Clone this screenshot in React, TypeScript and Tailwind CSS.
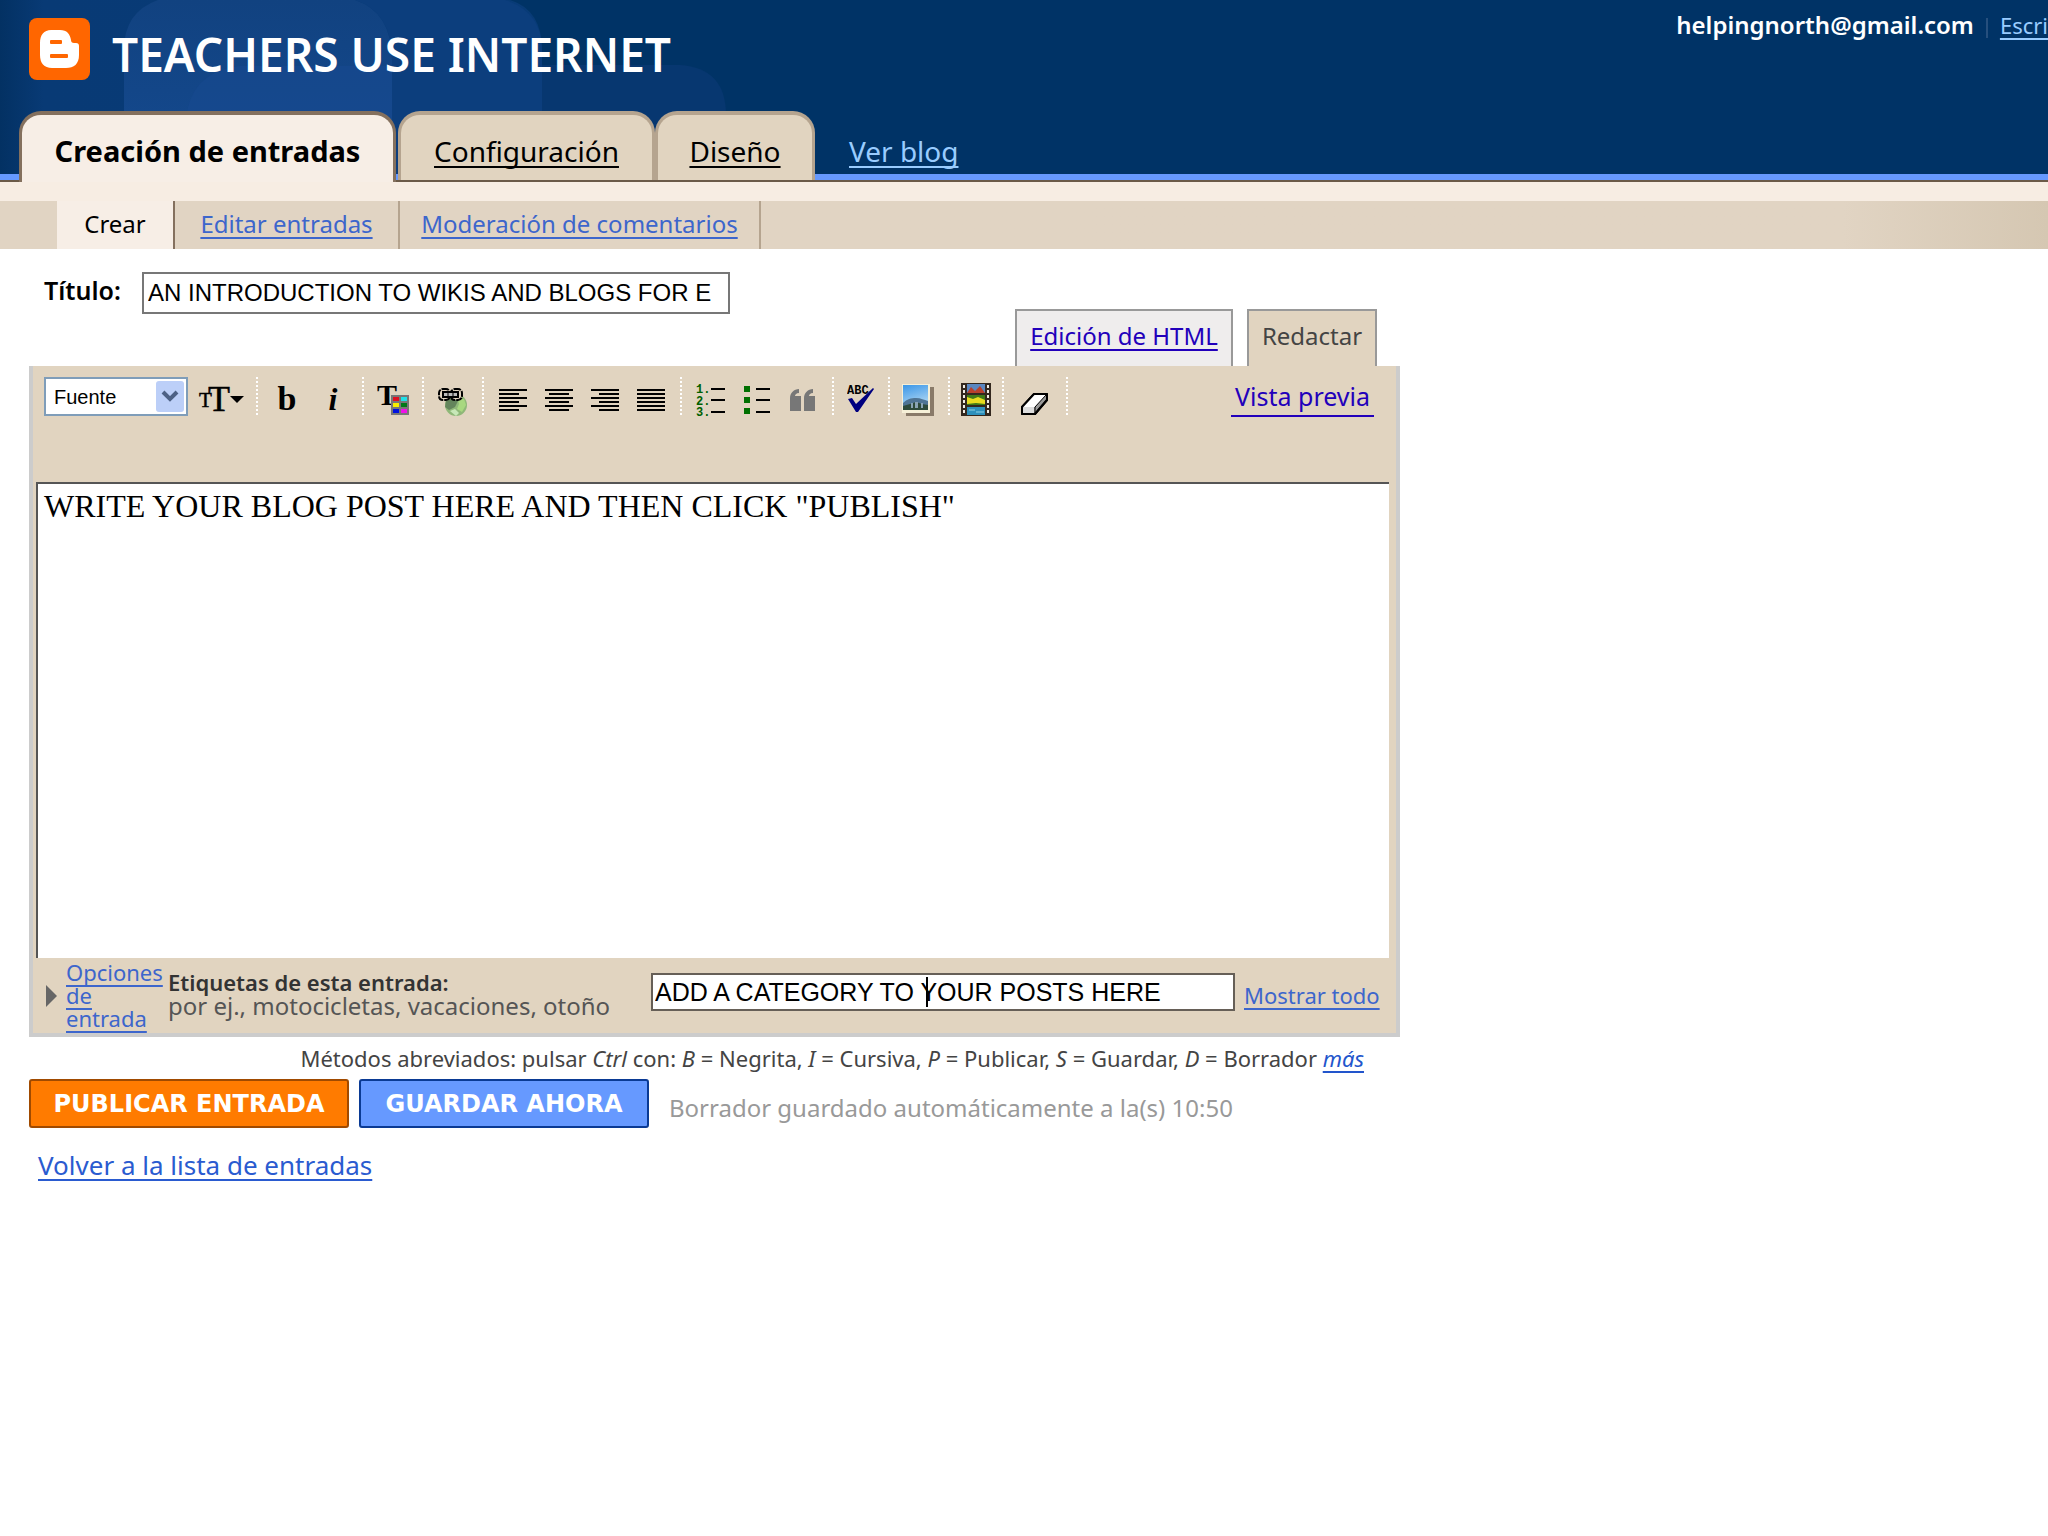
import React, { useState } from 'react';

const toolBtn = 'flex h-10 w-[46px] shrink-0 items-center justify-center';
const link = 'underline decoration-2 underline-offset-4 [text-decoration-skip-ink:none]';

function BloggerLogo() {
  return (
    <svg className="h-[62px] w-[61px] shrink-0" viewBox="0 0 61 62" aria-hidden="true">
      <rect width="61" height="62" rx="8" fill="#ff6600" />
      <path
        fill="#fff"
        d="M22 12h9c7 0 10 4 11 10 0 2 1 3 3 3h2c2 0 3 1 3 3v9c0 9-5 13-13 13H23c-8 0-12-5-12-13V25c0-8 4-13 11-13z"
      />
      <rect x="21" y="22" width="12" height="4" rx="1" fill="#ff6600" />
      <rect x="21" y="36" width="18" height="4" rx="1" fill="#ff6600" />
    </svg>
  );
}

function HeaderArt() {
  return (
    <svg className="absolute left-0 top-0 h-[180px] w-[1000px]" viewBox="0 0 1000 180" aria-hidden="true">
      <defs>
        <linearGradient id="edge" x1="0" x2="1" y1="0" y2="0">
          <stop offset="0" stopColor="#033163" />
          <stop offset="0.08" stopColor="#083a75" />
          <stop offset="1" stopColor="#083b77" />
        </linearGradient>
        <linearGradient id="bubble" x1="0" x2="0" y1="0" y2="1">
          <stop offset="0" stopColor="#114280" />
          <stop offset="1" stopColor="#154a90" />
        </linearGradient>
      </defs>
      <path d="M0 0H510Q542 10 542 50V180H0z" fill="url(#edge)" />
      <path d="M542 180V65H680Q726 68 726 115V180z" fill="#073770" />
      <path d="M124 180V50Q124 12 158 0H355Q392 12 392 60V180z" fill="url(#bubble)" />
      <path d="M186 180V120Q190 72 240 66H392V180z" fill="#17498f" opacity="0.7" />
      <path d="M392 180V60Q392 12 355 0H505Q542 12 542 50V180z" fill="#0c3e7d" />
    </svg>
  );
}

function Separator() {
  return (
    <svg className="mx-1.5 h-10 w-0.5 shrink-0" viewBox="0 0 2 40" aria-hidden="true">
      <path d="M1 0V40" stroke="#fff" strokeWidth="2" strokeDasharray="2 2" />
    </svg>
  );
}

function AlignIcon({ lines }: { lines: [number, number][] }) {
  return (
    <svg className="h-10 w-7" viewBox="0 0 28 40" fill="#000" aria-hidden="true">
      {lines.map(([x, w], i) => (
        <rect key={i} x={x} y={12 + i * 4} width={w} height="2" />
      ))}
    </svg>
  );
}

const alignments: { label: string; lines: [number, number][] }[] = [
  { label: 'Alinear a la izquierda', lines: [[0, 28], [0, 20], [0, 28], [0, 20], [0, 28], [0, 20]] },
  { label: 'Centrar', lines: [[0, 28], [4, 20], [0, 28], [4, 20], [0, 28], [4, 20]] },
  { label: 'Alinear a la derecha', lines: [[0, 28], [8, 20], [0, 28], [8, 20], [0, 28], [8, 20]] },
  { label: 'Justificar', lines: [[0, 28], [0, 28], [0, 28], [0, 28], [0, 28], [0, 28]] },
];

function SizeIcon() {
  return (
    <svg className="h-10 w-[46px] overflow-visible" viewBox="0 0 46 40" aria-hidden="true">
      <text x="0" y="30" fontSize="21" fontFamily="Liberation Serif, serif" stroke="#000" strokeWidth="0.5">T</text>
      <text x="9" y="34" fontSize="36" fontFamily="Liberation Serif, serif" stroke="#000" strokeWidth="0.5">T</text>
      <path d="M31 19h14l-7 7z" />
    </svg>
  );
}

function ColorIcon() {
  const cells = ['#e01020', '#20e0e8', '#f8f000', '#007818', '#0010e0', '#f010e8'];
  return (
    <svg className="h-10 w-8" viewBox="0 0 32 40" aria-hidden="true">
      <text x="0" y="28" fontSize="30" fontWeight="bold" fontFamily="Liberation Serif, serif">T</text>
      <rect x="14" y="18" width="18" height="20" fill="#777" />
      {cells.map((c, i) => (
        <rect key={c} x={16 + (i % 2) * 8} y={20 + Math.floor(i / 2) * 6} width="6" height="4" fill={c} />
      ))}
    </svg>
  );
}

function LinkIcon() {
  return (
    <svg className="h-10 w-[30px]" viewBox="0 0 30 40" aria-hidden="true">
      <circle cx="18" cy="28" r="11" fill="#8fb878" />
      <path d="M8 24c3-3 9-3 12 0l-3 6-6 3-4-3z" fill="#64855c" />
      <path d="M20 22h6l2 6-4 7-5-3 2-5z" fill="#a8d880" />
      <path d="M12 34l5-2 4 4-3 3z" fill="#c8e8b8" />
      <g fill="none" stroke="#000" strokeWidth="2">
        <rect x="1" y="12" width="11" height="11" rx="4" fill="#e1d4c0" strokeDasharray="6 1" />
        <rect x="13" y="12" width="11" height="11" rx="4" fill="#e1d4c0" strokeDasharray="6 1" />
        <rect x="5" y="15" width="15" height="5" fill="#bbb" />
        <path d="M10 15v5M15 15v5" strokeWidth="1" />
      </g>
    </svg>
  );
}

function NumberedIcon() {
  return (
    <svg className="h-10 w-7 overflow-visible" viewBox="0 0 28 40" aria-hidden="true">
      <g fill="#006000" fontSize="12" fontWeight="bold" fontFamily="Liberation Mono, monospace">
        <text x="-1" y="16">1.</text>
        <text x="-1" y="28">2.</text>
        <text x="-1" y="39">3.</text>
      </g>
      <path d="M14 12h14M14 23h14M14 35h14" stroke="#000" strokeWidth="2" />
    </svg>
  );
}

function BulletIcon() {
  return (
    <svg className="h-10 w-[26px]" viewBox="0 0 26 40" aria-hidden="true">
      <path d="M0 9h6v6H0zM0 20h6v6H0zM0 31h6v6H0z" fill="#007000" />
      <path d="M12 12h14M12 23h14M12 35h14" stroke="#000" strokeWidth="2" />
    </svg>
  );
}

function QuoteIcon() {
  return (
    <svg className="h-10 w-[26px]" viewBox="0 0 26 40" fill="#777" aria-hidden="true">
      <path d="M9 12v4c-3 0-4 2-4 3h6v15H0V21c0-5 4-9 9-9z" />
      <path d="M23 12v4c-3 0-4 2-4 3h6v15H14V21c0-5 4-9 9-9z" />
    </svg>
  );
}

function SpellIcon() {
  return (
    <svg className="h-10 w-7" viewBox="0 0 28 40" aria-hidden="true">
      <text x="0" y="17" fontSize="12" fontWeight="bold" fontFamily="Liberation Mono, monospace">ABC</text>
      <path d="M1 22l4-1 4 6L26 11l1 1-16 23H9z" fill="#000080" />
    </svg>
  );
}

function ImageIcon() {
  return (
    <svg className="h-10 w-[34px]" viewBox="0 0 34 40" aria-hidden="true">
      <defs>
        <linearGradient id="sky" x1="0" x2="0.3" y1="0" y2="1">
          <stop offset="0" stopColor="#3a96e8" />
          <stop offset="1" stopColor="#b8dcf4" />
        </linearGradient>
      </defs>
      <path d="M4 10h28v29H4z" fill="#6b5c4c" opacity="0.75" />
      <path d="M0 7h28v29H0z" fill="#f6f0d8" />
      <path d="M1 8h25v25H1z" fill="url(#sky)" />
      <path d="M1 26c4-4 8-5 13-5s8 2 12 3v9H1z" fill="#4f7494" />
      <path d="M1 29l7-2 6-2 6 2 6 1v5H1z" fill="#2e4a3a" />
      <path d="M9 26h2v5H9zM13 25h3v6h-3zM19 26h2v5h-2z" fill="#8aa4b4" />
    </svg>
  );
}

function FilmIcon() {
  const holes = [8, 13, 18, 23, 28, 33];
  return (
    <svg className="h-10 w-[30px]" viewBox="0 0 30 40" aria-hidden="true">
      <rect y="6" width="30" height="33" fill="#33281f" />
      <path d="M6 7h18v9H6z" fill="#5a86c0" />
      <path d="M6 16l4-6 4 4 5-5 5 7z" fill="#b8402c" />
      <path d="M6 18h18v10H6z" fill="#3f7a18" />
      <path d="M6 20l6 2 5-2 7 3v4l-9-1-9 1z" fill="#e8dc20" />
      <path d="M6 30h18v8H6z" fill="#2e90bc" />
      <path d="M8 33h6M15 35h8" stroke="#8cd0e4" />
      {holes.map((y) => (
        <path key={y} d={`M2 ${y}h2v3h-2zM26 ${y}h2v3h-2z`} fill="#f0ece4" />
      ))}
    </svg>
  );
}

function EraserIcon() {
  return (
    <svg className="h-10 w-7" viewBox="0 0 28 40" stroke="#000" strokeWidth="2" strokeLinejoin="round" aria-hidden="true">
      <path d="M1 30L13 17h13v6L14 37H1z" fill="#999" />
      <path d="M1 30L13 17h13L14 30z" fill="#fff" stroke="none" />
      <path d="M2 30h11v6H2z" fill="#ddd" stroke="none" />
      <path d="M1 30L13 17h13v6L14 37H1z" fill="none" />
      <path d="M14 36v-6L25 18" fill="none" strokeWidth="1" />
    </svg>
  );
}

export default function App() {
  const [title, setTitle] = useState('AN INTRODUCTION TO WIKIS AND BLOGS FOR E');
  const [body, setBody] = useState('WRITE YOUR BLOG POST HERE AND THEN CLICK "PUBLISH"');
  const [labels, setLabels] = useState('ADD A CATEGORY TO YOUR POSTS HERE');

  return (
    <div className="min-h-screen overflow-x-hidden bg-white font-['Noto_Sans',sans-serif] text-black">
      {/* Header */}
      <header className="relative bg-[#003366]">
        <HeaderArt />
        <div className="relative flex h-[111px] items-start justify-between pl-[29px]">
          <div className="flex gap-[22px] pt-[18px]">
            <BloggerLogo />
            <h1 className="whitespace-nowrap pt-1.5 text-[46px] font-semibold leading-[60px] text-white">TEACHERS USE INTERNET</h1>
          </div>
          <div className="flex gap-3 whitespace-nowrap pt-2 text-[24px] leading-[34px]">
            <span className="font-semibold text-white">helpingnorth@gmail.com</span>
            <span className="mt-2.5 h-5 w-0.5 bg-[#264f7d]" />
            <a href="#" className={`text-[22px] text-[#99ccff] ${link}`}>Escri</a>
          </div>
        </div>

        <nav className="relative flex h-[71px] items-stretch border-b-2 border-[#6b5a48] bg-[linear-gradient(#6699ff,#6699ff)] bg-[length:100%_6px] bg-bottom bg-no-repeat pl-[19px] text-[28px] leading-[40px]">
          <a href="#" className="-mb-0.5 mr-0.5 flex w-[377px] justify-center rounded-t-[22px] border-x-[3px] border-t-4 border-[#84705e] bg-[#f7eee6] pt-4 text-[29px] font-bold">
            Creación de entradas
          </a>
          <a href="#" className={`flex w-[257px] justify-center rounded-t-[22px] border-x-[3px] border-t-4 border-[#b5a48f] bg-[#e1d4c0] pt-4 ${link}`}>
            Configuración
          </a>
          <a href="#" className={`flex w-[160px] justify-center rounded-t-[22px] border-x-[3px] border-t-4 border-[#b5a48f] bg-[#e1d4c0] pt-4 ${link}`}>
            Diseño
          </a>
          <a href="#" className={`ml-[34px] pt-5 text-[#99ccff] ${link}`}>Ver blog</a>
        </nav>
      </header>

      <nav className="bg-[#f7ede3] pt-[19px] text-[24px] leading-[46px]">
        <div className="flex h-12 bg-linear-to-r from-[#e1d4c3] from-90% to-[#d5c7b2] pl-[57px]">
          <a href="#" className="w-[118px] border-r-2 border-[#84705e] bg-[#f7eee6] text-center">Crear</a>
          <a href="#" className={`w-[225px] border-r-2 border-[#b5a48f] text-center text-[#3d66cc] ${link}`}>Editar entradas</a>
          <a href="#" className={`w-[361px] border-r-2 border-[#b5a48f] text-center text-[#3d66cc] ${link}`}>Moderación de comentarios</a>
        </div>
      </nav>

      <main className="w-full max-w-[1400px] pl-[29px] pt-[23px]">
        <div className="flex pl-[15px]">
          <label htmlFor="title" className="w-[98px] pt-0.5 text-[25px] font-semibold leading-[32px]">Título:</label>
          <input
            id="title"
            value={title}
            onChange={(e) => setTitle(e.target.value)}
            className="h-[42px] w-[588px] border-2 border-[#777] bg-white pl-1 font-['Liberation_Sans',sans-serif] text-[24px]"
          />
        </div>

        {/* Edit mode tabs */}
        <div className="-mt-[5px] flex justify-end gap-[14px] pr-[23px] text-[24px] leading-[50px]">
          <a href="#" className={`h-[57px] w-[218px] border-2 border-b-0 border-[#999] bg-[#efeded] text-center text-[#2200bb] ${link}`}>Edición de HTML</a>
          <button type="button" className="h-[57px] w-[130px] border-2 border-b-0 border-[#999] bg-[#e1d4c0] pb-1.5 text-[#444]">Redactar</button>
        </div>

        <section className="border-4 border-t-0 border-[#cccccc] bg-[#e1d4c0]">
          <div className="flex h-[116px] items-start pl-[11px] pt-[11px]">
            <div className="relative mr-1.5 shrink-0">
              <select aria-label="Fuente" className="h-[39px] w-[144px] appearance-none border-2 border-[#7f9db9] bg-white pl-2 font-['Liberation_Sans',sans-serif] text-[20px]">
                <option>Fuente</option>
              </select>
              <svg className="pointer-events-none absolute right-1 top-1 h-[31px] w-7" viewBox="0 0 28 31" aria-hidden="true">
                <rect width="28" height="31" rx="3" fill="#bccff8" />
                <path d="M7 11l7 7 7-7" fill="none" stroke="#4d6185" strokeWidth="4" />
              </svg>
            </div>
            <button type="button" aria-label="Tamaño" className="flex h-10 w-14 shrink-0 items-center justify-center"><SizeIcon /></button>
            <Separator />
            <button type="button" aria-label="Negrita" className={`${toolBtn} pt-1 font-['Liberation_Serif',serif] text-[34px] font-bold leading-none`}>b</button>
            <button type="button" aria-label="Cursiva" className={`${toolBtn} pt-1 font-['Liberation_Serif',serif] text-[32px] font-bold italic leading-none`}>i</button>
            <Separator />
            <button type="button" aria-label="Color" className={toolBtn}><ColorIcon /></button>
            <Separator />
            <button type="button" aria-label="Enlace" className={toolBtn}><LinkIcon /></button>
            <Separator />
            {alignments.map((a) => (
              <button key={a.label} type="button" aria-label={a.label} className={toolBtn}><AlignIcon lines={a.lines} /></button>
            ))}
            <Separator />
            <button type="button" aria-label="Lista numerada" className={toolBtn}><NumberedIcon /></button>
            <button type="button" aria-label="Lista con viñetas" className={toolBtn}><BulletIcon /></button>
            <button type="button" aria-label="Cita" className={toolBtn}><QuoteIcon /></button>
            <Separator />
            <button type="button" aria-label="Ortografía" className="flex h-10 w-[42px] shrink-0 items-center justify-center"><SpellIcon /></button>
            <Separator />
            <button type="button" aria-label="Imagen" className={toolBtn}><ImageIcon /></button>
            <Separator />
            <button type="button" aria-label="Vídeo" className="flex h-10 w-10 shrink-0 items-center justify-center"><FilmIcon /></button>
            <Separator />
            <button type="button" aria-label="Borrar formato" className="flex h-10 w-[50px] shrink-0 items-center justify-center"><EraserIcon /></button>
            <Separator />
            <a href="#" className="ml-auto mr-[22px] whitespace-nowrap border-b-2 border-[#2200bb] px-1 text-[25px] leading-[38px] text-[#2200bb]">Vista previa</a>
          </div>

          <div className="pl-[3px] pr-[7px]">
            <textarea
              aria-label="Entrada"
              value={body}
              onChange={(e) => setBody(e.target.value)}
              className="block h-[476px] w-full resize-none border-l-2 border-t-2 border-[#555] bg-white px-1.5 py-1 font-['Liberation_Serif',serif] text-[32px] leading-9"
            />
          </div>

          <div className="flex h-[75px] px-[13px] text-[22px] leading-[23px]">
            <svg className="mt-[27px] h-[22px] w-3 shrink-0" viewBox="0 0 12 22" aria-hidden="true">
              <path d="M0 0l11 11L0 22z" fill="#666" />
            </svg>
            <a href="#" className={`ml-2 w-[102px] pt-[3px] text-[#3d66cc] ${link}`}>Opciones de entrada</a>
            <label htmlFor="labels" className="pt-[13px]">
              <span className="block font-semibold text-[#333]">Etiquetas de esta entrada:</span>
              <span className="block text-[24px] text-[#555]">por ej., motocicletas, vacaciones, otoño</span>
            </label>
            <div className="relative ml-auto mt-[15px] w-[584px]">
              <input
                id="labels"
                value={labels}
                onChange={(e) => setLabels(e.target.value)}
                className="h-[38px] w-full border-2 border-[#665f57] bg-white px-0.5 font-['Liberation_Sans',sans-serif] text-[25px]"
              />
              <span className="absolute left-[275px] top-1 h-[30px] w-0.5 bg-black" />
            </div>
            <a href="#" className={`ml-[9px] w-[139px] whitespace-nowrap pt-[26px] text-[#3d66cc] ${link}`}>Mostrar todo</a>
          </div>
        </section>

        <p className="pr-9 pt-1.5 text-right text-[22px] leading-[30px] text-[#444]">
          Métodos abreviados: pulsar <em>Ctrl</em> con: <em>B</em> = Negrita, <em>I</em> = Cursiva, <em>P</em> = Publicar, <em>S</em> = Guardar, <em>D</em> = Borrador{' '}
          <a href="#" className={`italic text-[#2255cc] ${link}`}>más</a>
        </p>

        <div className="flex items-start gap-[10px] pt-1.5">
          <button type="button" className="h-[49px] w-[320px] rounded-[3px] border-2 border-[#a04a00] bg-[#ff7b00] font-['DejaVu_Sans',sans-serif] text-[24px] font-bold text-white">PUBLICAR ENTRADA</button>
          <button type="button" className="h-[49px] w-[290px] rounded-[3px] border-2 border-[#0a3a94] bg-[#6699ff] font-['DejaVu_Sans',sans-serif] text-[24px] font-bold text-white">GUARDAR AHORA</button>
          <span className="pl-2.5 pt-3 text-[24px] leading-[34px] text-[#999]">Borrador guardado automáticamente a la(s) 10:50</span>
        </div>

        <div className="pl-[9px] pt-[18px] text-[26px] leading-[38px]">
          <a href="#" className={`text-[#2a5bd0] ${link}`}>Volver a la lista de entradas</a>
        </div>
      </main>
    </div>
  );
}
